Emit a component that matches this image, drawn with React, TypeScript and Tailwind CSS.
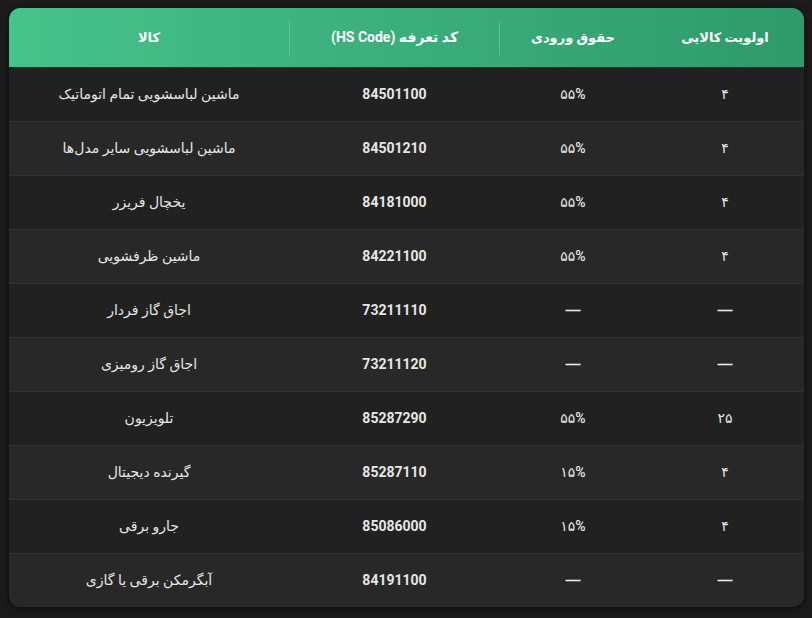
import React from "react";

type Row = {
  name: string;
  code: string;
  duty: string;
  priority: string;
};

const rows: Row[] = [
  { name: "ماشین لباسشویی تمام اتوماتیک", code: "84501100", duty: "۵۵%", priority: "۴" },
  { name: "ماشین لباسشویی سایر مدل‌ها", code: "84501210", duty: "۵۵%", priority: "۴" },
  { name: "یخچال فریزر", code: "84181000", duty: "۵۵%", priority: "۴" },
  { name: "ماشین ظرفشویی", code: "84221100", duty: "۵۵%", priority: "۴" },
  { name: "اجاق گاز فردار", code: "73211110", duty: "—", priority: "—" },
  { name: "اجاق گاز رومیزی", code: "73211120", duty: "—", priority: "—" },
  { name: "تلویزیون", code: "85287290", duty: "۵۵%", priority: "۲۵" },
  { name: "گیرنده دیجیتال", code: "85287110", duty: "۱۵%", priority: "۴" },
  { name: "جارو برقی", code: "85086000", duty: "۱۵%", priority: "۴" },
  { name: "آبگرمکن برقی یا گازی", code: "84191100", duty: "—", priority: "—" },
];

// em dash in Arial metrics is wider, like the reference
const Cell = ({ value }: { value: string }) =>
  value === "—" ? (
    <span className="font-['Liberation_Sans',sans-serif] text-[15px] font-bold">—</span>
  ) : (
    <span>{value}</span>
  );

export default function App() {
  return (
    <div className="min-h-[618px] w-full bg-[#1b1b1b] p-2 font-['Roboto','DejaVu_Sans',sans-serif]">
      <div
        dir="rtl"
        className="w-[796px] overflow-hidden rounded-xl border-l border-[#141414] bg-[#212121] shadow-[0_2px_6px_rgba(0,0,0,0.5)]"
      >
        {/* header */}
        <div className="flex h-[59px] items-center bg-gradient-to-l from-[#2f9a6b] to-[#46c28b] text-[13px] font-bold text-white">
          <div className="flex w-[158px] justify-center">اولویت کالایی</div>
          <div className="flex w-[146px] justify-center">حقوق ورودی</div>
          <div className="flex h-[34px] w-[211px] items-center justify-center border-x border-white/20">
            <span className="text-[14px]">کد تعرفه (HS Code)</span>
          </div>
          <div className="flex flex-1 justify-center">کالا</div>
        </div>

        {/* body */}
        {rows.map((r, i) => (
          <div
            key={r.code}
            className={`flex h-[54px] items-center text-[14px] text-[#e6e6e6] ${
              i > 0 ? "border-t border-[#323232]" : ""
            } ${i % 2 === 1 ? "bg-[#282828]" : "bg-[#212121]"}`}
          >
            <div className="flex w-[158px] justify-center font-medium">
              <Cell value={r.priority} />
            </div>
            <div className="flex w-[146px] justify-center font-medium">
              <Cell value={r.duty} />
            </div>
            <div className="flex w-[211px] justify-center font-bold" dir="ltr">
              {r.code}
            </div>
            <div className="flex flex-1 justify-center font-medium">{r.name}</div>
          </div>
        ))}
      </div>
    </div>
  );
}
